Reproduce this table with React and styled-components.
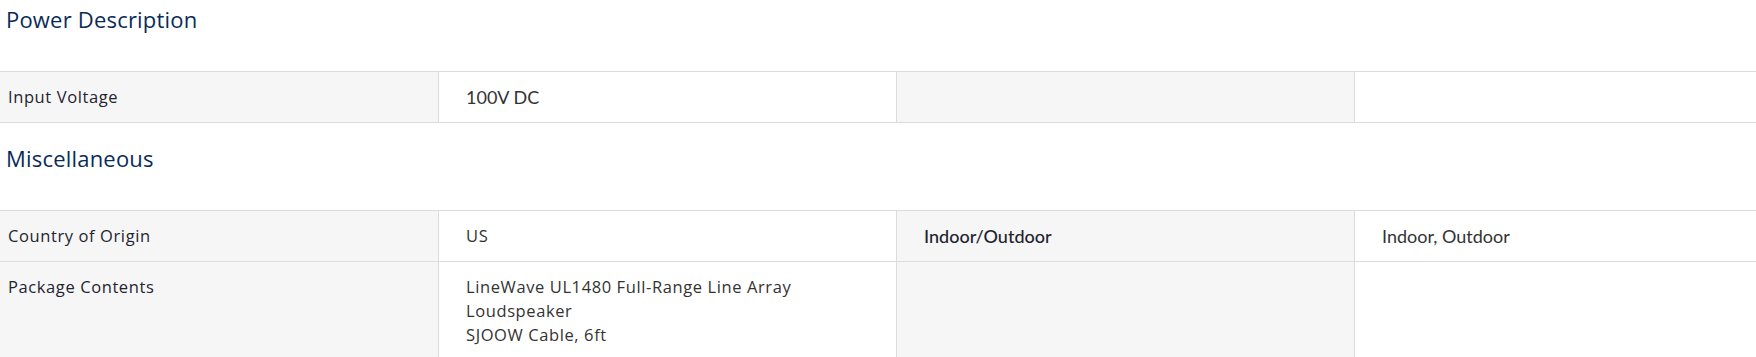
import styled, { createGlobalStyle } from 'styled-components';

const GlobalStyle = createGlobalStyle`
  body {
    margin: 0;
    background: #fff;
    font-family: "Open Sans", "Noto Sans", sans-serif;
    color: #333;
  }
`;

const specs = [
  {
    title: 'Power Description',
    rows: [
      [
        { text: 'Input Voltage' },
        { text: '100V DC', alt: true },
        { text: '' },
        { text: '' },
      ],
    ],
  },
  {
    title: 'Miscellaneous',
    rows: [
      [
        { text: 'Country of Origin' },
        { text: 'US' },
        { text: 'Indoor/Outdoor', alt: true },
        { text: 'Indoor, Outdoor', alt: true },
      ],
      [
        { text: 'Package Contents' },
        { lines: ['LineWave UL1480 Full-Range Line Array', 'Loudspeaker', 'SJOOW Cable, 6ft'] },
        { text: '' },
        { text: '' },
      ],
    ],
  },
];

const App = () => {
  return (
    <Page>
      <GlobalStyle />
      {specs.map((section, i) => (
        <Section key={section.title} $first={i === 0}>
          <Title>{section.title}</Title>
          <Table>
            {section.rows.map((row, r) => (
              <Row key={r}>
                {row.map((cell, c) => (
                  <Cell key={c} $label={c % 2 === 0} $first={c === 0} $alt={cell.alt}>
                    {cell.lines
                      ? cell.lines.map((l) => <Line key={l}>{l}</Line>)
                      : cell.text}
                  </Cell>
                ))}
              </Row>
            ))}
          </Table>
        </Section>
      ))}
    </Page>
  );
};

const Page = styled.main`
  width: 1756px;
  overflow: hidden;
`;

const Section = styled.section`
  margin-top: ${(p) => (p.$first ? '0' : '16px')};
`;

const Title = styled.h3`
  margin: 0 0 38px;
  padding: 5px 0 0 6px;
  font-size: 22px;
  line-height: 28px;
  letter-spacing: 0.2px;
  font-weight: 400;
  color: #082b5a;
`;

const Table = styled.div`
  border-top: 1px solid #dcdcdc;
`;

const Row = styled.div`
  display: grid;
  grid-template-columns: 439px 458px 458px 1fr;
  border-bottom: 1px solid #dcdcdc;
`;

const Cell = styled.div`
  padding: 13px ${(p) => (p.$first ? '8px' : '27px')};
  background: ${(p) => (p.$label ? '#f6f6f6' : '#fff')};
  border-right: 1px solid #dcdcdc;
  font-size: ${(p) => (p.$alt ? '18px' : '16.5px')};
  letter-spacing: ${(p) => (p.$alt ? '0' : '0.6px')};
  line-height: 24px;
  font-family: ${(p) => (p.$alt ? 'Lato, "Liberation Sans", sans-serif' : 'inherit')};
  font-weight: ${(p) => (p.$label ? 500 : 400)};
  color: ${(p) => (p.$label ? '#1f2430' : '#333')};
  &:last-child {
    border-right: none;
  }
`;

const Line = styled.div``;

export default App;
